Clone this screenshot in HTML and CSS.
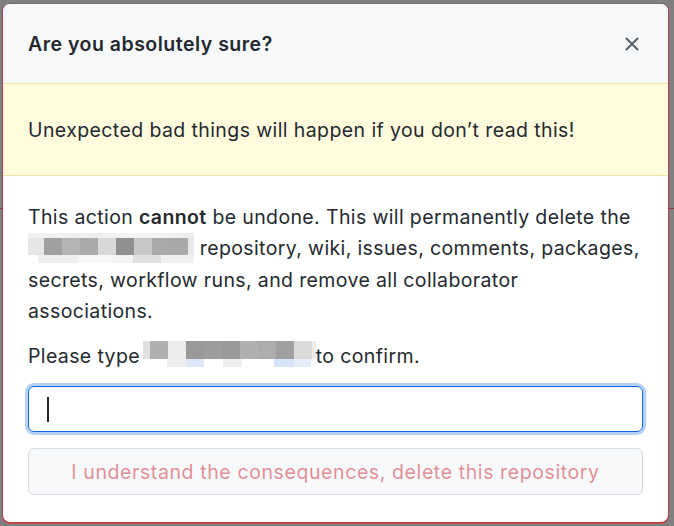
FILE: index.html
```html
<!DOCTYPE html>
<html>
<head>
<meta charset="utf-8">
<link rel="stylesheet" href="styles.css">
</head>
<body>
<div class="page">
  <div class="page-line"></div>
</div>
<div class="modal">
  <div class="modal-header">
    <h1 class="modal-title">Are you absolutely sure?</h1>
    <svg class="close" width="14" height="14" viewBox="0 0 14 14"><path d="M1.5 1.5 L12.5 12.5 M12.5 1.5 L1.5 12.5" stroke="#57606a" stroke-width="2" stroke-linecap="round" fill="none"/></svg>
  </div>
  <div class="flash">Unexpected bad things will happen if you don’t read this!</div>
  <div class="modal-body">
    <p class="para">This action <strong>cannot</strong> be undone. This will permanently delete the<br><span class="mosaic m1"><i class="a"></i><i class="b"></i><i class="c"></i><i class="d"></i><i class="e"></i><i class="f"></i><i class="g"></i><i class="h"></i><i class="k"></i><i class="l"></i></span> repository, wiki, issues, comments, packages,<br>secrets, workflow runs, and remove all collaborator<br>associations.</p>
    <p class="para">Please type <span class="mosaic m2"><i class="a"></i><i class="b"></i><i class="c"></i><i class="d"></i><i class="e"></i><i class="f"></i><i class="g"></i><i class="h"></i><i class="k"></i><i class="l"></i></span>to confirm.</p>
    <div class="input"><span class="caret"></span></div>
    <div class="button">I understand the consequences, delete this repository</div>
  </div>
</div>
</body>
</html>
```
FILE: styles.css
```css
html, body {
  margin: 0;
  padding: 0;
}
body {
  width: 674px;
  height: 526px;
  background: #808080;
  font-family: Inter, "Liberation Sans", Arial, sans-serif;
  color: #24292f;
  position: relative;
  overflow: hidden;
}
.page {
  height: 526px;
  padding-top: 208px;
  box-sizing: border-box;
}
.page-line {
  height: 1px;
  background: #8a3a40;
}
.modal {
  position: absolute;
  left: 3px;
  top: 4px;
  width: 665px;
  background: #fff;
  border-radius: 7px;
  overflow: hidden;
  box-shadow: 0 0 0 1px rgba(0, 0, 0, 0.12), 0 1px 0 1px rgba(215, 58, 73, 0.8);
}
.modal-header {
  height: 79px;
  background: #f6f8fa;
  display: flex;
  align-items: center;
  justify-content: space-between;
  padding: 0 29px 0 25px;
}
.modal-title {
  margin: 0;
  font-size: 19.5px;
  font-weight: 600;
  letter-spacing: 0.5px;
}
.close {
  display: block;
}
.flash {
  height: 91px;
  background: #fffbdd;
  border-top: 1px solid #efe3a6;
  border-bottom: 1px solid #efe3a6;
  display: flex;
  align-items: center;
  padding: 0 25px;
  font-size: 19.5px;
  letter-spacing: 0.4px;
}
.modal-body {
  padding: 26px 25px 27px;
}
.para {
  margin: 0 0 14px;
  font-size: 19.5px;
  line-height: 31.3px;
  letter-spacing: 0.37px;
}
.para strong {
  font-weight: 600;
}
.mosaic {
  display: inline-grid;
  vertical-align: middle;
  grid-template-columns: 16px repeat(8, 18px) 6px;
  grid-template-rows: 5px 17px 8px;
  margin-top: -4px;
}
.mosaic i {
  display: block;
}
.m1 .a { background: #e6e6e6; } .m1 .b { background: #a0a0a0; } .m1 .c { background: #b4b4b4; }
.m1 .d { background: #aaaaaa; } .m1 .e { background: #d8d8d8; } .m1 .f { background: #909090; }
.m1 .g { background: #c8c8c8; } .m1 .h { background: #aaaaaa; } .m1 .k { background: #a8a8a8; }
.m1 .l { background: #e8e8e8; }
.m1 i { grid-row: 2; }
.m1::before {
  content: "";
  grid-row: 1;
  grid-column: 1 / 11;
  background: linear-gradient(90deg, #f3f3f3, #eeeeee 40%, #f5f5f5 70%, #ececec);
}
.m1::after {
  content: "";
  grid-row: 3;
  grid-column: 1 / 11;
  background: linear-gradient(90deg, #fff 0, #fff 6%, #eeeeee 6%, #eeeeee 30%, #f7f7fa 30%, #f7f7fa 50%, #f3f3f3 50%, #f3f3f3 63%, #e0e0e0 63%, #e0e0e0 80%, #f0f0f0 80%);
}
.m2 {
  grid-template-columns: 7px repeat(9, 18px) 4px;
  grid-template-rows: 18px 8px;
  margin-top: -8px;
  margin-left: -3px;
}
.m2 i { grid-row: 1; }
.m2 .a { background: #e0e0e0; } .m2 .b { background: #b0b0b0; } .m2 .c { background: #ececec; }
.m2 .d { background: #999999; } .m2 .e { background: #9c9c9c; } .m2 .f { background: #999999; }
.m2 .g { background: #b0b0b0; } .m2 .h { background: #adadad; } .m2 .k { background: #a0a0a0; }
.m2 .l { background: #dadada; }
.m2::after {
  content: "";
  grid-row: 2;
  grid-column: 1 / 12;
  background: linear-gradient(90deg, #fff 0, #fff 14%, #eeeeee 14%, #eeeeee 25%, #dce8fa 25%, #dce8fa 35%, #fff 35%, #fff 46%, #eeeeee 46%, #eeeeee 57%, #fff 57%, #fff 76%, #d6e4fa 76%, #d6e4fa 87%, #e4eefb 87%, #e4eefb 97%, #fff 97%);
}
.m2::before {
  content: "";
  grid-row: 1;
  grid-column: 11;
  background: #ececec;
}
.input {
  height: 44px;
  border: 1px solid #0969da;
  border-radius: 6px;
  box-shadow: 0 0 0 3px rgba(9, 105, 218, 0.3);
  display: flex;
  align-items: center;
  padding-left: 18px;
  margin-top: 14px;
}
.caret {
  display: block;
  width: 1.5px;
  height: 25px;
  background: #24292f;
}
.button {
  margin-top: 16px;
  height: 45px;
  border: 1px solid #d8dce0;
  border-radius: 6px;
  background: #f6f8fa;
  color: rgba(207, 34, 46, 0.5);
  font-size: 19.5px;
  letter-spacing: 0.6px;
  display: flex;
  align-items: center;
  justify-content: center;
}
```
